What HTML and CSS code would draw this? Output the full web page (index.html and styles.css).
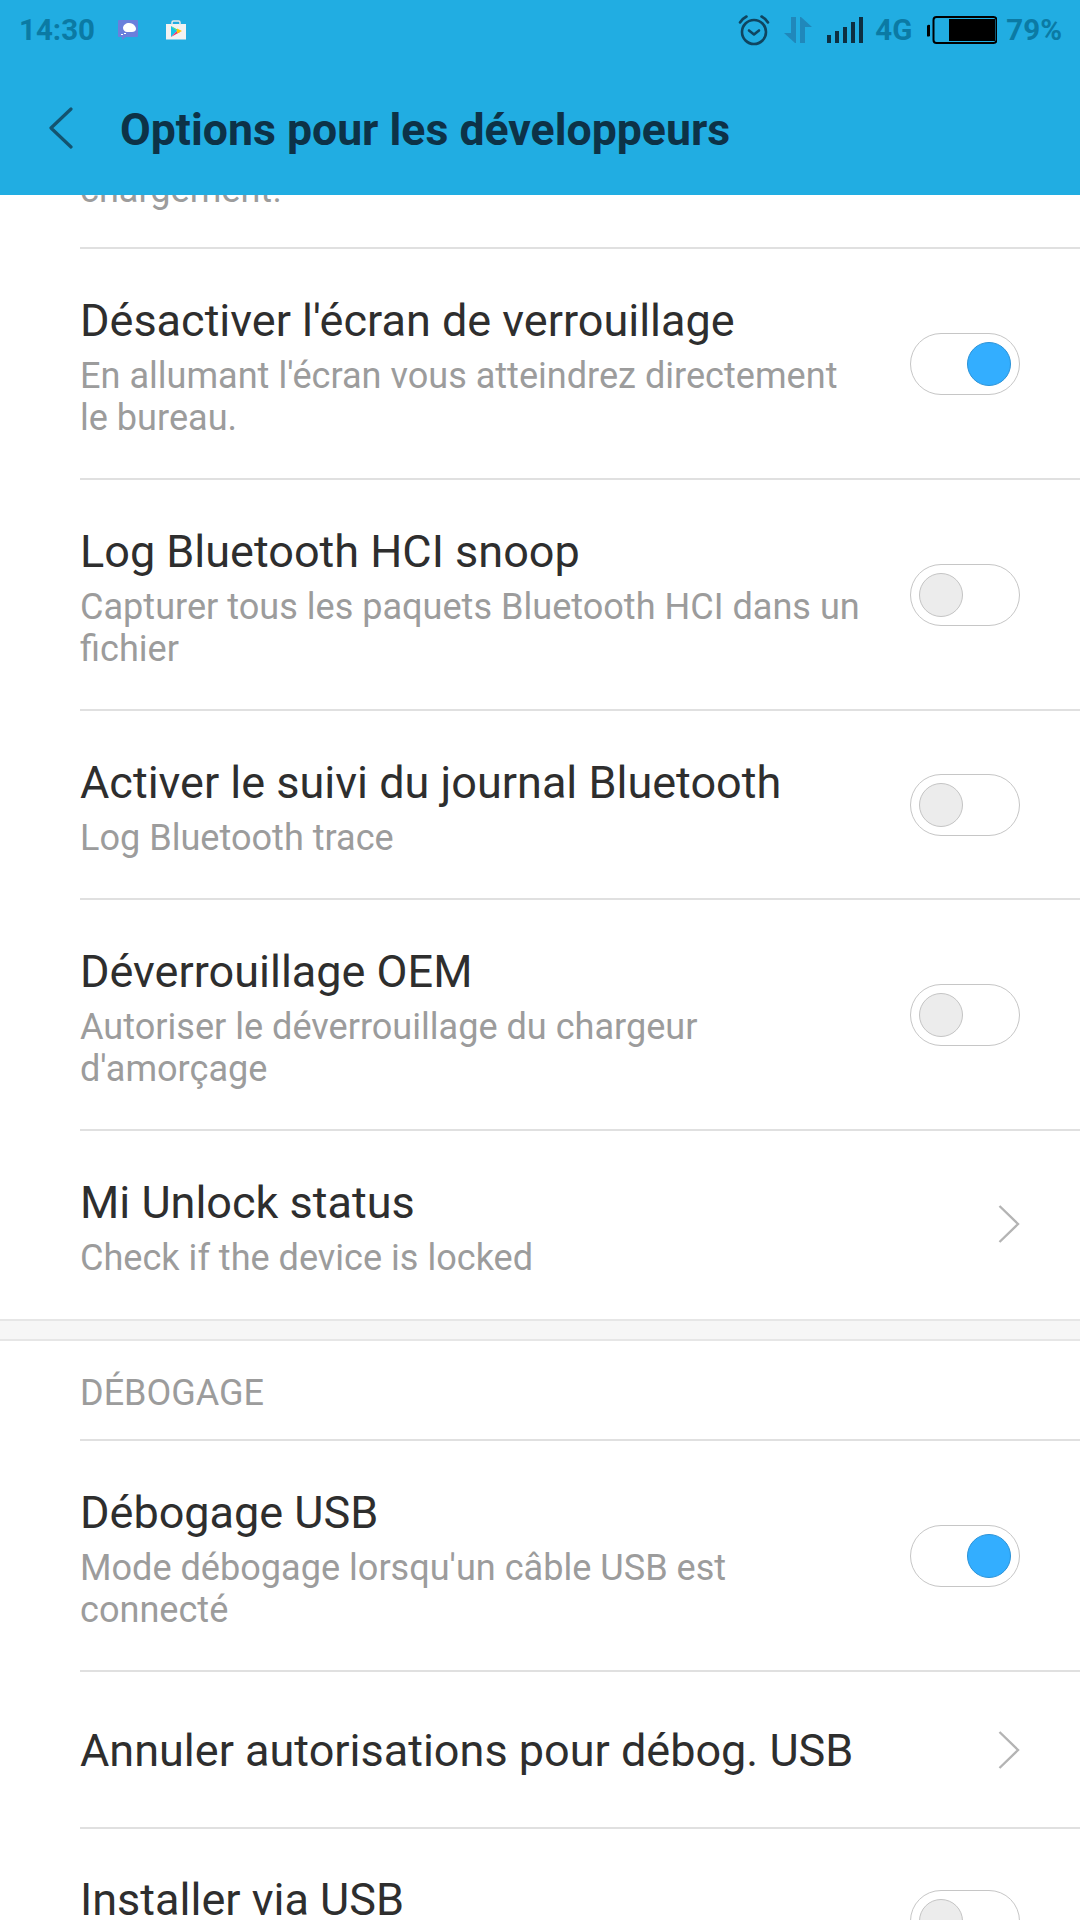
FILE: index.html
```html
<!DOCTYPE html>
<html lang="fr">
<head>
<meta charset="utf-8">
<title>Options pour les développeurs</title>
<link rel="stylesheet" href="styles.css">
</head>
<body>
<div class="screen">
  <header class="appbar">
    <div class="status">
      <span class="time">14:30</span>
      <svg class="notif n1" width="22" height="22" viewBox="0 0 22 22"><path fill="#6a7fdc" d="M3 1h17a1 1 0 0 1 1 1v15a1 1 0 0 1-1 1H9l-4 3v-3H2a1 1 0 0 1-1-1V2a1 1 0 0 1 1-1z"/><path fill="#fff" d="M6 9c0-3 3-5 6-5s4 1 5 2 2 2 2 4-2 3-4 3H10c-2 0-4-2-4-4z"/><path fill="#fff" d="M4 15h2v1H4zm3-1h2v1H7z"/></svg>
      <svg class="notif n2" width="22" height="20" viewBox="0 0 22 20"><path fill="#f2f2f2" d="M1 4h20v15.500H1z"/><path fill="none" stroke="#e9e9e9" stroke-width="1.500" d="M7 5V2.500a1.500 1.500 0 0 1 1.500-1.500h5A1.500 1.500 0 0 1 15 2.500V5"/><path fill="#16c4e8" d="M6 6l6 5-6 6z"/><path fill="#36d67a" d="M6 6l9 5-3 0z"/><path fill="#f4326a" d="M6 17l6-6 3 1z"/><path fill="#ffc400" d="M12 8.500l5 2.500-5 2.500z"/></svg>
      <span class="spacer"></span>
      <svg class="sys alarm" width="32" height="32" viewBox="0 0 32 32"><circle cx="16" cy="18" r="12" fill="none" stroke="#0f4560" stroke-width="2.600"/><path fill="none" stroke="#0f4560" stroke-width="2.600" stroke-linecap="round" stroke-linejoin="round" d="M11 16.500l5 4 5-4"/><path fill="none" stroke="#0f4560" stroke-width="2.600" stroke-linecap="round" d="M2 8.500Q4.500 4.500 8.500 2.500M30 8.500Q27.500 4.500 23.500 2.500"/></svg>
      <svg class="sys arrows" width="28" height="28" viewBox="0 0 28 28"><path fill="#2088bb" d="M12 1v26h-1L0 17h7V1zM16 27V1h1l11 10h-7v16z"/></svg>
      <svg class="sys signal" width="36" height="26" viewBox="0 0 36 26"><path fill="#0d2f42" d="M0 18h4v8H0zM8 14h4v12H8zM16 10h4v16h-4zM24 5h4v21h-4zM32 0h4v26h-4z"/></svg>
      <span class="net">4G</span>
      <svg class="sys battery" width="70" height="28" viewBox="0 0 70 28"><path fill="#000" d="M0 14a3 3 0 0 1 3-5v11a3 3 0 0 1-3-6z"/><rect x="6.500" y="1" width="63" height="26" rx="3" fill="none" stroke="#000" stroke-width="2"/><rect x="22" y="3" width="46" height="22" fill="#000"/></svg>
      <span class="pct">79%</span>
    </div>
    <div class="titlebar">
      <svg class="back" width="24" height="42" viewBox="0 0 24 42"><path fill="none" stroke="#14536f" stroke-width="3.200" stroke-linecap="round" stroke-linejoin="round" d="M22 2L2 21l20 19"/></svg>
      <h1 class="title">Options pour les développeurs</h1>
    </div>
  </header>

  <main class="list">
    <div class="clipped"><span class="sub">chargement!</span></div>

    <div class="row tall">
      <div class="text"><div class="name">Désactiver l'écran de verrouillage</div><div class="sub">En allumant l'écran vous atteindrez directement le bureau.</div></div>
      <span class="switch on"><span class="knob"></span></span>
    </div>
    <div class="row tall">
      <div class="text"><div class="name">Log Bluetooth HCI snoop</div><div class="sub">Capturer tous les paquets Bluetooth HCI dans un fichier</div></div>
      <span class="switch"><span class="knob"></span></span>
    </div>
    <div class="row mid">
      <div class="text"><div class="name">Activer le suivi du journal Bluetooth</div><div class="sub">Log Bluetooth trace</div></div>
      <span class="switch"><span class="knob"></span></span>
    </div>
    <div class="row tall">
      <div class="text"><div class="name">Déverrouillage OEM</div><div class="sub">Autoriser le déverrouillage du chargeur d'amorçage</div></div>
      <span class="switch"><span class="knob"></span></span>
    </div>
    <div class="row mid last">
      <div class="text"><div class="name">Mi Unlock status</div><div class="sub">Check if the device is locked</div></div>
      <svg class="chev" width="22" height="38" viewBox="0 0 22 38"><path fill="none" stroke="#b4b4b4" stroke-width="2.400" d="M1.500 1L20 19 1.500 37"/></svg>
    </div>

    <div class="gap"></div>

    <div class="section">DÉBOGAGE</div>
    <div class="row tall">
      <div class="text"><div class="name">Débogage USB</div><div class="sub">Mode débogage lorsqu'un câble USB est connecté</div></div>
      <span class="switch on"><span class="knob"></span></span>
    </div>
    <div class="row short">
      <div class="text"><div class="name">Annuler autorisations pour débog. USB</div></div>
      <svg class="chev" width="22" height="38" viewBox="0 0 22 38"><path fill="none" stroke="#b4b4b4" stroke-width="2.400" d="M1.500 1L20 19 1.500 37"/></svg>
    </div>
    <div class="row tall peek">
      <div class="text"><div class="name">Installer via USB</div></div>
      <span class="switch"><span class="knob"></span></span>
    </div>
  </main>
</div>
</body>
</html>
```
FILE: styles.css
```css
* { box-sizing: border-box; }
html, body { margin: 0; padding: 0; }
body { width: 1080px; height: 1920px; overflow: hidden; background: #fff; font-family: Roboto, "Liberation Sans", sans-serif; }
.screen { width: 1080px; height: 1920px; display: flex; flex-direction: column; overflow: hidden; }

.appbar { height: 195px; flex: none; background: #21ade2; display: flex; flex-direction: column; }
.status { height: 60px; display: flex; align-items: center; padding: 0 18px 0 19px; }
.time { font-size: 29.500px; font-weight: 700; color: #0b7aa4; width: 98px; }
.net, .pct { font-size: 29.500px; font-weight: 700; color: #0b7aa4; }
.notif { flex: none; }
.n2 { margin-left: 26px; }
.spacer { flex: 1; }
.sys { flex: none; }
.arrows { margin-left: 14px; }
.signal { margin-left: 15px; }
.net { margin-left: 12px; }
.battery { margin-left: 15px; }
.pct { margin-left: 9px; }

.titlebar { flex: 1; display: flex; align-items: center; padding: 0 0 0 49px; }
.title { margin: 5px 0 0 47px; font-size: 44.600px; font-weight: 700; color: #0d3247; }

.list { flex: 1; overflow: hidden; }
.clipped { height: 54px; border-bottom: 2px solid #e0e0e0; margin-left: 80px; display: flex; align-items: flex-end; overflow: hidden; padding-bottom: 36px; }

.row { display: flex; align-items: center; justify-content: space-between; margin-left: 80px; padding: 8px 60px 0 0; border-bottom: 2px solid #e0e0e0; }
.tall { height: 231px; }
.mid { height: 189px; }
.short { height: 157px; padding-top: 2px; }
.last { height: 188px; border-bottom: none; }
.peek { align-items: flex-start; padding-top: 47px; border-bottom: none; }
.peek .switch { margin-top: 14px; }

.text { width: 788px; }
.name { font-size: 45px; line-height: 48px; color: #2e2e2e; }
.sub { font-size: 36.100px; line-height: 42px; color: #9c9c9c; margin-top: 10px; }
.clipped .sub { margin: 0; flex: none; }

.switch { flex: none; width: 110px; height: 62px; margin-top: -8px; border: 1.500px solid #c6c6c6; border-radius: 31px; display: flex; align-items: center; padding: 0 8px; background: #fff; }
.knob { width: 44px; height: 44px; border-radius: 50%; background: #ececec; border: 1.500px solid #c4c4c4; }
.switch.on { justify-content: flex-end; }
.switch.on .knob { background: #33aeff; border-color: #2b93d8; }

.chev { flex: none; margin-top: -10px; }
.short .chev { margin-top: -2px; }

.gap { height: 22px; background: #f6f6f6; border-top: 2px solid #e6e6e6; border-bottom: 2px solid #e6e6e6; }
.section { height: 100px; margin-left: 80px; padding-top: 6px; border-bottom: 2px solid #e0e0e0; font-size: 36px; color: #9c9c9c; display: flex; align-items: center; }
```
